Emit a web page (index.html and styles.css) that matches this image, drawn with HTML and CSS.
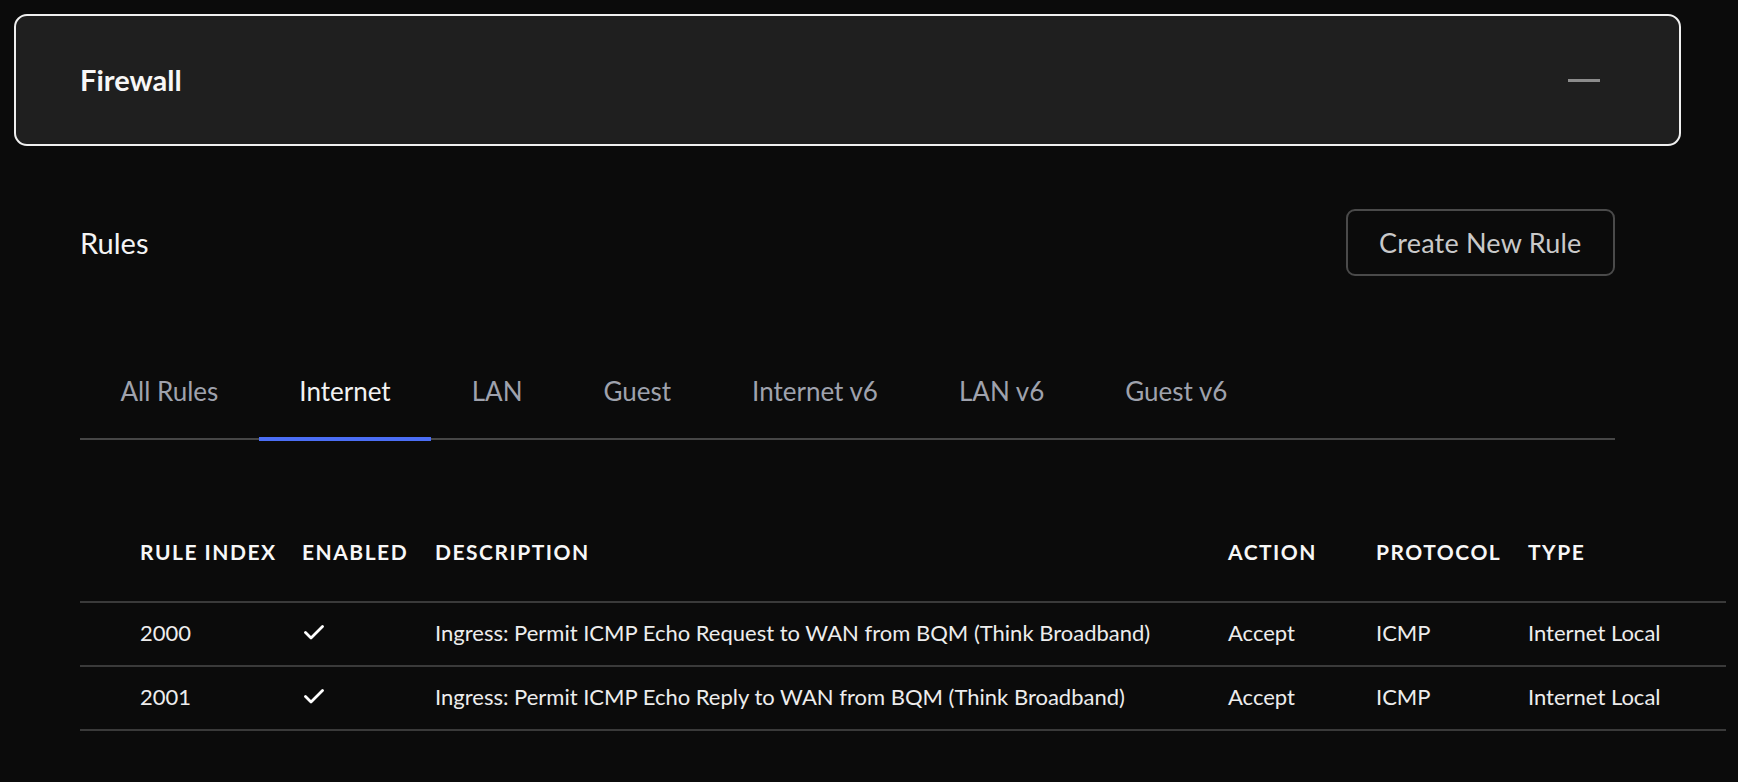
FILE: index.html
```html
<!DOCTYPE html>
<html lang="en">
<head>
<meta charset="utf-8">
<title>Firewall</title>
<link rel="stylesheet" href="styles.css">
</head>
<body>
  <section class="panel-header">
    <h1 class="panel-title">Firewall</h1>
    <span class="collapse-icon" aria-label="Collapse"></span>
  </section>

  <main class="content">
    <div class="rules-bar">
      <h2 class="rules-title">Rules</h2>
      <button class="btn-outline">Create New Rule</button>
    </div>

    <nav class="tabs">
      <span class="tab">All Rules</span>
      <span class="tab active">Internet</span>
      <span class="tab">LAN</span>
      <span class="tab">Guest</span>
      <span class="tab">Internet v6</span>
      <span class="tab">LAN v6</span>
      <span class="tab">Guest v6</span>
    </nav>

    <div class="table">
      <div class="row head">
        <div class="cell">RULE INDEX</div>
        <div class="cell">ENABLED</div>
        <div class="cell">DESCRIPTION</div>
        <div class="cell">ACTION</div>
        <div class="cell">PROTOCOL</div>
        <div class="cell">TYPE</div>
      </div>
      <div class="row">
        <div class="cell">2000</div>
        <div class="cell"><svg class="check" width="20" height="15" viewBox="0 0 20 15"><path d="M1.5 7.5 L7 13 L18.5 1.5" fill="none" stroke="#fff" stroke-width="2.8" stroke-linecap="round" stroke-linejoin="round"/></svg></div>
        <div class="cell">Ingress: Permit ICMP Echo Request to WAN from BQM (Think Broadband)</div>
        <div class="cell">Accept</div>
        <div class="cell">ICMP</div>
        <div class="cell">Internet Local</div>
      </div>
      <div class="row">
        <div class="cell">2001</div>
        <div class="cell"><svg class="check" width="20" height="15" viewBox="0 0 20 15"><path d="M1.5 7.5 L7 13 L18.5 1.5" fill="none" stroke="#fff" stroke-width="2.8" stroke-linecap="round" stroke-linejoin="round"/></svg></div>
        <div class="cell">Ingress: Permit ICMP Echo Reply to WAN from BQM (Think Broadband)</div>
        <div class="cell">Accept</div>
        <div class="cell">ICMP</div>
        <div class="cell">Internet Local</div>
      </div>
    </div>
  </main>
</body>
</html>
```

FILE: styles.css
```css
* {
  box-sizing: border-box;
}

html, body {
  margin: 0;
  padding: 0;
  background: #0b0b0b;
  color: #f2f2f2;
  font-family: Lato, "Open Sans", "Liberation Sans", sans-serif;
  overflow: hidden;
}

body {
  width: 1738px;
  height: 782px;
  padding-top: 14px;
}

.panel-header {
  margin-left: 14px;
  width: 1667px;
  height: 132px;
  border: 2px solid #f0f0f0;
  border-radius: 13px;
  background: #1f1f1f;
  display: flex;
  align-items: center;
  justify-content: space-between;
  padding: 0 64px;
}

.panel-title {
  margin: 0;
  font-size: 29px;
  font-weight: 700;
  color: #f7f7f7;
  line-height: 34px;
}

.collapse-icon {
  display: block;
  width: 32px;
  height: 3px;
  background: #8c8c8c;
  margin-right: 15px;
}

.content {
  margin-left: 80px;
  width: 1535px;
}

.rules-bar {
  margin-top: 63px;
  height: 67px;
  display: flex;
  align-items: center;
  justify-content: space-between;
}

.rules-title {
  margin: 0;
  font-size: 29px;
  font-weight: 400;
  color: #f4f4f4;
  line-height: 34px;
}

.btn-outline {
  height: 67px;
  padding: 0 31.5px;
  background: transparent;
  border: 2px solid #4a4a4a;
  border-radius: 9px;
  color: #c9c9c9;
  font-family: inherit;
  font-size: 27px;
  font-weight: 400;
  letter-spacing: 0.2px;
}

.tabs {
  margin-top: 99px;
  display: flex;
  border-bottom: 2px solid #464646;
}

.tab {
  padding: 0 40.5px 30px;
  font-size: 26px;
  line-height: 32px;
  color: #9fa2ad;
  border-bottom: 4px solid transparent;
  margin-bottom: -3px;
}

.tab.active {
  color: #f2f2f2;
  border-bottom-color: #4b6ef5;
}

.table {
  margin-top: 99px;
  width: 1646px;
}

.row {
  display: grid;
  grid-template-columns: 162px 133px 793px 148px 152px 1fr;
  padding-left: 60px;
  padding-bottom: 3px;
  height: 64px;
  align-items: center;
  border-bottom: 2px solid #3a3a3a;
  font-size: 22px;
  color: #ededed;
}

.row.head {
  height: 64px;
  padding-bottom: 0;
  align-items: start;
  font-size: 21px;
  font-weight: 700;
  letter-spacing: 1.5px;
  color: #f7f7f7;
  line-height: 26px;
}

.cell {
  white-space: nowrap;
}

.check {
  display: block;
  margin-left: 2px;
}
```
